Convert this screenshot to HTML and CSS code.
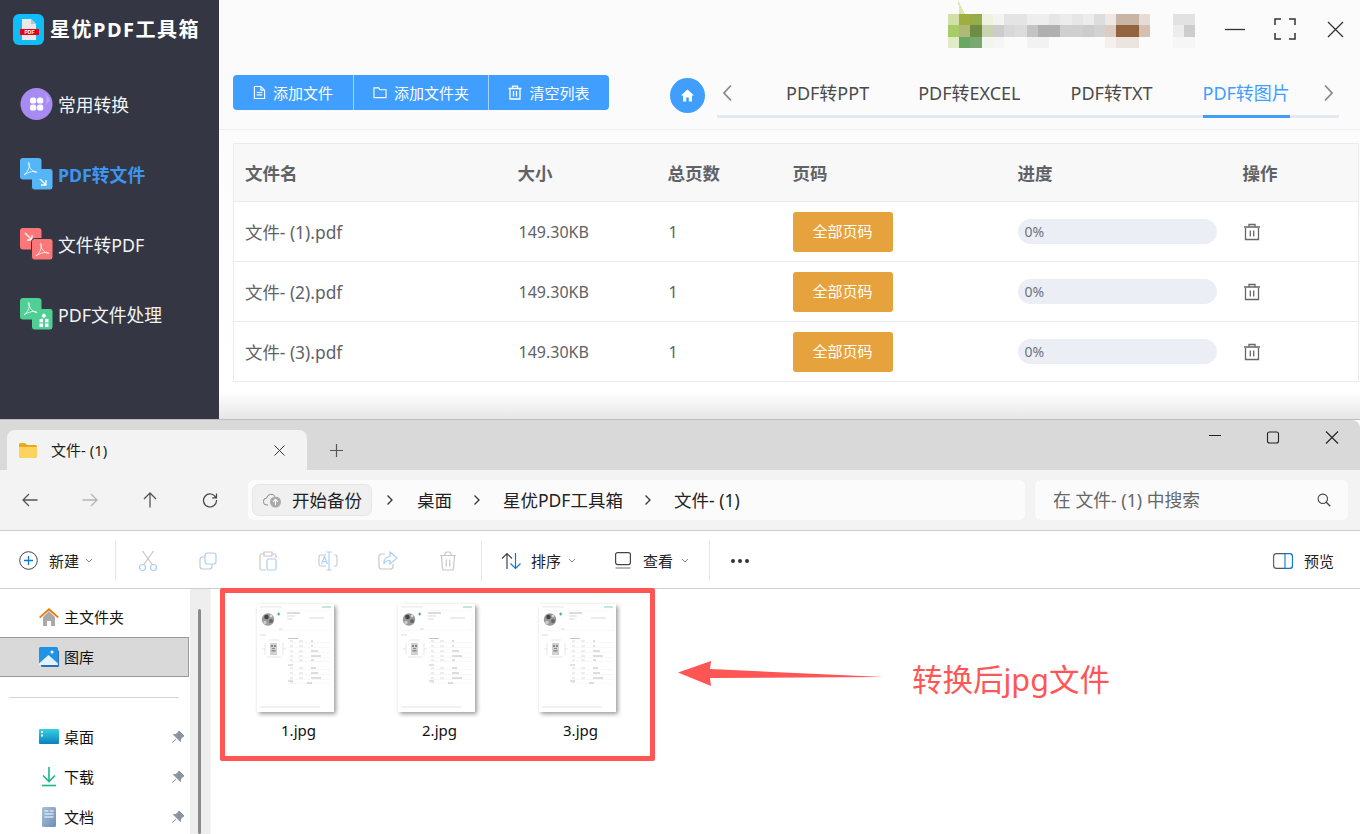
FILE: index.html
```html
<!DOCTYPE html>
<html lang="zh-CN">
<head>
<meta charset="utf-8">
<title>星优PDF工具箱</title>
<link rel="stylesheet" href="styles.css">
</head>
<body>
<svg class="defs" width="0" height="0" aria-hidden="true">
  <defs>
    <symbol id="acro" viewBox="0 0 21 21"><path d="M4 17c2-1 4.500-5 5.500-9 .4-2-.2-4-1-3.500s0 3 2 6 4.500 4 6 4-.5-1.500-3-1.200-6 1.500-8 2.500c-1 .5-1.500.8-1.500 1.200" fill="none" stroke="#fff" stroke-width=".9" opacity=".85"/></symbol>
    <symbol id="trash" viewBox="0 0 18 18"><path d="M2.500 5v11.500h13V5M1 4h16M6 4V1.500h6V4M7.300 7.500v6M10.700 7.500v6" fill="none" stroke="currentColor" stroke-width="1.300"/></symbol>
    <symbol id="pin" viewBox="0 0 14 14"><path d="M8 1l5 5-1.200.6L9.500 9l-.2 2.600-6.800-7L5 4.400l2.400-2.300zM5 9l-3.800 3.800" fill="#8b949c" stroke="#8b949c" stroke-width="1"/></symbol>
    <symbol id="chev" viewBox="0 0 8 5"><path d="M1 1l3 3 3-3" fill="none" stroke="#777" stroke-width=".9"/></symbol>
    <symbol id="crumb" viewBox="0 0 8 12"><path d="M1.500 1.500L6 6l-4.500 4.500" fill="none" stroke="#333" stroke-width="1.300"/></symbol>
    <symbol id="doc" viewBox="0 0 77 108">
      <rect width="77" height="108" fill="#fff"/>
      <path d="M3 3h22" stroke="#ddd" stroke-width=".7"/><path d="M65 3h9" stroke="#8fd0ac" stroke-width="1"/>
      <path d="M3 6.500h71v20H3z" fill="none" stroke="#f2f2f2" stroke-width=".5"/>
      <circle cx="11" cy="15.500" r="6.200" fill="#9a9a9a"/><circle cx="9.500" cy="13" r="2.300" fill="#444"/><circle cx="14" cy="17" r="2" fill="#666"/><circle cx="8" cy="18.500" r="1.700" fill="#ccc"/><circle cx="14" cy="12" r="1.300" fill="#ddd"/>
      <path d="M21.700 8.500v3M20.200 10h3" stroke="#3aa76d" stroke-width="1"/>
      <path d="M30 9h13" stroke="#999" stroke-width=".7"/><path d="M30 12h8M30 15h6M52 14h15M22 25h4M3 31h6" stroke="#ccc" stroke-width=".7"/>
      <g fill="none" stroke="#ccc" stroke-width=".5"><path d="M8 39v12M26 39v12M5 45h3M26 45h3M10 53h14M12 36h10"/></g>
      <path d="M13 39h7v12h-7z" fill="#d2d2d2"/><path d="M14 41h2v2h-2zM17 41h2v2h-2zM14.500 46h4v1.500h-4zM15 44h3v1h-3z" fill="#8a8a8a"/>
      <path d="M31 34.500h10M31 61h5M31 77h5" stroke="#aaa" stroke-width=".7"/>
      <path d="M31 38.500h43M31 43.500h43M31 48.500h43M31 53.500h43M31 57.500h43M31 65.500h43M31 70.500h43M31 75.500h43M31 79.500h43" stroke="#f0f0f0" stroke-width=".5"/>
      <path d="M33 37h3M42 37h4M33 42h3M42 42h4M33 47h3M42 47h4M33 52h3M42 52h4M33 56h3M42 56h4M33 64h3M42 64h4M33 69h3M42 69h4M33 74h3M42 74h4M33 78h3" stroke="#d0d0d0" stroke-width=".8"/>
      <path d="M54 37h2M54 42h2M54 47h7M54 52h10M54 56h3M54 64h5M54 69h7M54 74h10M50 79h5" stroke="#aaa" stroke-width=".8"/>
      <path d="M3 103h60" stroke="#ddd" stroke-width=".8"/>
    </symbol>
  </defs>
</svg>

<div class="stage">
  <section class="app">
    <aside class="side">
      <div class="brand">
        <svg class="logo" viewBox="0 0 31 31"><rect width="31" height="31" rx="6" fill="#0fbdfb"/><path d="M9 5h9l5 5v16H9z" fill="#e8e8ea"/><path d="M18 5l5 5h-5z" fill="#bfc1c6"/><rect x="7" y="15" width="19" height="6" fill="#e8000f"/><text class="logo-t" x="16.500" y="20">PDF</text></svg>
        <span class="brand-name">星优PDF工具箱</span>
      </div>
      <nav class="menu">
        <a class="menu-item">
          <svg class="menu-ic" viewBox="0 0 33 32"><circle cx="16.500" cy="16" r="16" fill="#a78bf3"/><path d="M24 5a16 16 0 0 1 6 8l-5 4a10 10 0 0 0-1-12z" fill="#bda6f7"/><g fill="#fff"><rect x="10" y="9.500" width="6.300" height="6.100" rx="2.600"/><rect x="17" y="9.500" width="6.300" height="6.100" rx="2.600"/><rect x="10" y="16.400" width="6.300" height="6.100" rx="2.600"/><rect x="17" y="16.400" width="6.300" height="6.100" rx="2.600"/></g></svg>
          <span>常用转换</span>
        </a>
        <a class="menu-item active">
          <svg class="menu-ic" viewBox="0 0 33 32"><rect x="11.500" y="10.500" width="21.500" height="21.500" rx="3" fill="#55b6f7" stroke="#343743"/><path d="M19 20l7 7M26 22v5h-5" fill="none" stroke="#fff" stroke-width="1.300"/><rect width="21.500" height="21.500" rx="3" fill="#55b6f7"/><use href="#acro" width="21" height="21"/></svg>
          <span>PDF转文件</span>
        </a>
        <a class="menu-item">
          <svg class="menu-ic" viewBox="0 0 33 32"><rect width="21.500" height="21.500" rx="3" fill="#fd7678"/><path d="M5 5l7 7M12 7v5H7" fill="none" stroke="#fff" stroke-width="1.300"/><rect x="11.500" y="10.500" width="21.500" height="21.500" rx="3" fill="#fd7678" stroke="#343743"/><use href="#acro" x="12" y="11" width="21" height="21"/></svg>
          <span>文件转PDF</span>
        </a>
        <a class="menu-item">
          <svg class="menu-ic" viewBox="0 0 33 32"><rect x="11.500" y="10.500" width="21.500" height="21.500" rx="3" fill="#4fcf93" stroke="#343743"/><g fill="#fff"><rect x="22" y="16" width="3.500" height="3.500" transform="rotate(45 23.800 17.800)"/><rect x="19.500" y="20.800" width="3.500" height="3.500"/><rect x="25" y="20.800" width="3.500" height="3.500"/><rect x="19.500" y="25.500" width="3.500" height="3.500"/><rect x="25" y="25.500" width="3.500" height="3.500"/></g><rect width="21.500" height="21.500" rx="3" fill="#4fcf93"/><use href="#acro" width="21" height="21"/></svg>
          <span>PDF文件处理</span>
        </a>
      </nav>
    </aside>

    <main class="main">
      <header class="titlebar">
        <svg class="mosaic" viewBox="0 0 22 3" preserveAspectRatio="none" shape-rendering="crispEdges">
          <g>
            <rect x="0" y="0" width="1" height="1" fill="#d0e0a8"/><rect x="1" y="0" width="1" height="1" fill="#a0ad40"/><rect x="2" y="0" width="1" height="1" fill="#95ad45"/><rect x="3" y="0" width="1" height="1" fill="#eef2e0"/><rect x="4" y="0" width="1" height="1" fill="#f3f3f3"/><rect x="5" y="0" width="2" height="1" fill="#e4e4e4"/><rect x="7" y="0" width="2" height="1" fill="#eeeeee"/><rect x="9" y="0" width="1" height="1" fill="#e6e6e6"/><rect x="10" y="0" width="1" height="1" fill="#ececec"/><rect x="11" y="0" width="1" height="1" fill="#e6e6e6"/><rect x="12" y="0" width="1" height="1" fill="#ececec"/><rect x="13" y="0" width="1" height="1" fill="#dddddd"/><rect x="14" y="0" width="1" height="1" fill="#efe9e5"/><rect x="15" y="0" width="2" height="1" fill="#c9b5a6"/><rect x="17" y="0" width="1" height="1" fill="#e6dcd5"/><rect x="20" y="0" width="2" height="1" fill="#e2e2e2"/>
            <rect x="0" y="1" width="1" height="1" fill="#a8cc68"/><rect x="1" y="1" width="1" height="1" fill="#b0b878"/><rect x="2" y="1" width="1" height="1" fill="#6f8c45"/><rect x="3" y="1" width="1" height="1" fill="#c8d4b0"/><rect x="4" y="1" width="1" height="1" fill="#cccccc"/><rect x="5" y="1" width="1" height="1" fill="#d8d8d8"/><rect x="6" y="1" width="1" height="1" fill="#dcdcdc"/><rect x="7" y="1" width="1" height="1" fill="#c4c4c4"/><rect x="8" y="1" width="2" height="1" fill="#b0b0b0"/><rect x="10" y="1" width="2" height="1" fill="#cfcfcf"/><rect x="12" y="1" width="1" height="1" fill="#cccccc"/><rect x="13" y="1" width="1" height="1" fill="#d2d2d2"/><rect x="14" y="1" width="1" height="1" fill="#dccdc2"/><rect x="15" y="1" width="2" height="1" fill="#93633f"/><rect x="17" y="1" width="1" height="1" fill="#d5c0b0"/><rect x="20" y="1" width="1" height="1" fill="#ececec"/><rect x="21" y="1" width="1" height="1" fill="#cdcdcd"/>
            <rect x="0" y="2" width="1" height="1" fill="#e0ecc8"/><rect x="1" y="2" width="1" height="1" fill="#68a860"/><rect x="2" y="2" width="1" height="1" fill="#7aa870"/><rect x="3" y="2" width="1" height="1" fill="#f2f5ee"/><rect x="4" y="2" width="1" height="1" fill="#f5f5f5"/><rect x="7" y="2" width="2" height="1" fill="#f2f2f2"/><rect x="14" y="2" width="1" height="1" fill="#f5f0ec"/><rect x="15" y="2" width="2" height="1" fill="#ebe4df"/><rect x="20" y="2" width="2" height="1" fill="#f6f6f6"/>
          </g>
          <path d="M.9-1.200L1.500 0H1z" fill="#dde8b0"/>
        </svg>
        <div class="winbtns">
          <button class="winbtn"><svg width="20" height="20" viewBox="0 0 20 20"><path d="M0 10.500h20" stroke="#333" stroke-width="1.300"/></svg></button>
          <button class="winbtn"><svg width="22" height="22" viewBox="0 0 22 22"><path d="M1 7V1h6M15 1h6v6M21 15v6h-6M7 21H1v-6" fill="none" stroke="#333" stroke-width="1.500"/></svg></button>
          <button class="winbtn"><svg width="17" height="17" viewBox="0 0 17 17"><path d="M1 1l15 15M16 1L1 16" stroke="#333" stroke-width="1.300"/></svg></button>
        </div>
      </header>

      <div class="toolbar">
        <div class="btn-group">
          <button class="tbtn t1"><svg width="13" height="15" viewBox="0 0 14 15"><path d="M1.500 1h7l4 4v9h-11zM8.500 1v4h4M4 7.500h6M4 10h6" fill="none" stroke="#fff" stroke-width="1.200"/></svg><span>添加文件</span></button>
          <button class="tbtn t2"><svg width="14" height="13" viewBox="0 0 15 13"><path d="M1 1.500h5l1.500 2H14V12H1z" fill="none" stroke="#fff" stroke-width="1.200"/></svg><span>添加文件夹</span></button>
          <button class="tbtn t3"><svg width="14" height="15" viewBox="0 0 14 15"><path d="M2 4v10h10V4M.5 3.500h13M4.500 3.500V1.200h5v2.300M5.500 6v5.500M8.500 6v5.500" fill="none" stroke="#fff" stroke-width="1.300"/></svg><span>清空列表</span></button>
        </div>
        <button class="home"><svg width="15" height="15" viewBox="0 0 15 15"><path d="M7.500 1.500L1 7.500h2v6h3.200V9.500h2.600v4H12v-6h2z" fill="#fff"/></svg></button>
        <div class="tabs">
          <svg class="chevbtn" width="12" height="18" viewBox="0 0 12 18"><path d="M10 1.500L3 9l7 7.500" fill="none" stroke="#8a8a8a" stroke-width="1.800"/></svg>
          <a class="tab first">PDF转PPT</a>
          <a class="tab">PDF转EXCEL</a>
          <a class="tab">PDF转TXT</a>
          <a class="tab on">PDF转图片</a>
          <svg class="chevbtn right" width="12" height="18" viewBox="0 0 12 18"><path d="M2 1.500L9 9l-7 7.500" fill="none" stroke="#8a8a8a" stroke-width="1.800"/></svg>
        </div>
      </div>

      <div class="content">
        <table class="grid">
          <thead>
            <tr><th class="c1">文件名</th><th class="c2">大小</th><th class="c3">总页数</th><th class="c4">页码</th><th class="c5">进度</th><th class="c6">操作</th></tr>
          </thead>
          <tbody>
            <tr><td>文件- (1).pdf</td><td class="num">149.30KB</td><td class="num">1</td><td><button class="pages"><span class="up">全部页码</span></button></td><td><div class="bar">0%</div></td><td><svg class="del"><use href="#trash"/></svg></td></tr>
            <tr><td>文件- (2).pdf</td><td class="num">149.30KB</td><td class="num">1</td><td><button class="pages"><span class="up">全部页码</span></button></td><td><div class="bar">0%</div></td><td><svg class="del"><use href="#trash"/></svg></td></tr>
            <tr><td>文件- (3).pdf</td><td class="num">149.30KB</td><td class="num">1</td><td><button class="pages"><span class="up">全部页码</span></button></td><td><div class="bar">0%</div></td><td><svg class="del"><use href="#trash"/></svg></td></tr>
          </tbody>
        </table>
      </div>
    </main>
  </section>

  <section class="explorer">
    <div class="tabstrip">
      <div class="xtab">
        <svg width="18" height="15" viewBox="0 0 18 15"><path d="M0 1.500A1.500 1.500 0 0 1 1.500 0H6l2 2h8.500A1.500 1.500 0 0 1 18 3.500V5H0z" fill="#e8a91f"/><path d="M0 4h18v9.500a1.500 1.500 0 0 1-1.500 1.500h-15A1.500 1.500 0 0 1 0 13.500z" fill="#fdd35d"/></svg>
        <span class="xtab-t up">文件- (1)</span>
        <svg class="xtab-x" width="11" height="11" viewBox="0 0 11 11"><path d="M.5.500l10 10M10.500.500l-10 10" stroke="#333" stroke-width="1"/></svg>
      </div>
      <button class="xplus"><svg width="13" height="13" viewBox="0 0 13 13"><path d="M6.500 0v13M0 6.500h13" stroke="#555" stroke-width="1.200"/></svg></button>
      <div class="xwin">
        <button class="xwbtn"><svg width="14" height="14" viewBox="0 0 14 14"><path d="M1 4.500h12" stroke="#222" stroke-width="1"/></svg></button>
        <button class="xwbtn"><svg width="14" height="14" viewBox="0 0 14 14"><rect x="1.500" y="1" width="11" height="11" rx="2" fill="none" stroke="#222" stroke-width="1.100"/></svg></button>
        <button class="xwbtn"><svg width="14" height="14" viewBox="0 0 14 14"><path d="M1 .500l12 12M13 .500l-12 12" stroke="#222" stroke-width="1.100"/></svg></button>
      </div>
    </div>

    <div class="navrow">
      <button class="nbtn"><svg width="16" height="14" viewBox="0 0 16 14"><path d="M15.500 7H1M7 1L1 7l6 6" fill="none" stroke="#555" stroke-width="1.300"/></svg></button>
      <button class="nbtn"><svg width="16" height="14" viewBox="0 0 16 14"><path d="M.5 7H15M9 1l6 6-6 6" fill="none" stroke="#b5b5b5" stroke-width="1.300"/></svg></button>
      <button class="nbtn"><svg width="16" height="16" viewBox="0 0 16 16"><path d="M8 15.500V1M2 7l6-6 6 6" fill="none" stroke="#555" stroke-width="1.300"/></svg></button>
      <button class="nbtn"><svg width="16" height="16" viewBox="0 0 16 16"><path d="M13.800 5.500A6.500 6.500 0 1 0 14.500 8M14.500 1.500v4.300h-4.300" fill="none" stroke="#444" stroke-width="1.200"/></svg></button>
      <div class="addr">
        <div class="chip">
          <svg width="19" height="16" viewBox="0 0 19 16"><path d="M5 13H4a3.500 3.500 0 0 1-.3-7A4.500 4.500 0 0 1 12 4.500" fill="none" stroke="#8a8a8a" stroke-width="1"/><circle cx="12.500" cy="10" r="5.500" fill="#a9a9a9"/><path d="M12.500 13V7.500M10 9.800l2.500-2.500 2.500 2.500" fill="none" stroke="#fff" stroke-width="1.100"/></svg>
          <span class="up">开始备份</span>
        </div>
        <svg class="crumb c-a"><use href="#crumb"/></svg><span class="up">桌面</span>
        <svg class="crumb"><use href="#crumb"/></svg><span class="up">星优PDF工具箱</span>
        <svg class="crumb"><use href="#crumb"/></svg><span class="up">文件- (1)</span>
      </div>
      <div class="search">
        <span class="up">在 文件- (1) 中搜索</span>
        <svg width="14" height="14" viewBox="0 0 14 14"><circle cx="5.800" cy="5.800" r="4.700" fill="none" stroke="#444" stroke-width="1.100"/><path d="M9.300 9.300l4 4" stroke="#444" stroke-width="1.300"/></svg>
      </div>
    </div>

    <div class="cmdbar">
      <div class="cmd new">
        <svg width="19" height="19" viewBox="0 0 19 19"><circle cx="9.500" cy="9.500" r="8.800" fill="none" stroke="#444" stroke-width="1"/><path d="M9.500 5v9M5 9.500h9" stroke="#0a78d7" stroke-width="1.300"/></svg>
        <span>新建</span><svg class="cv"><use href="#chev"/></svg>
      </div>
      <i class="vsep"></i>
      <button class="ic"><svg width="20" height="22" viewBox="0 0 20 22"><g fill="none" stroke="#a8d0f5" stroke-width="1.200"><circle cx="4.500" cy="17.500" r="3"/><circle cx="15.500" cy="17.500" r="3"/></g><path d="M5.500 15L15.500 1M14.500 15L4.500 1" fill="none" stroke="#c4c4c4" stroke-width="1.200"/></svg></button>
      <button class="ic"><svg width="18" height="18" viewBox="0 0 18 18"><rect x="6" y="1" width="11" height="11" rx="2.500" fill="#fff" stroke="#a8d0f5" stroke-width="1.200"/><path d="M6 5H3.500A2.500 2.500 0 0 0 1 7.500v7A2.500 2.500 0 0 0 3.500 17h7a2.500 2.500 0 0 0 2.500-2.500V12" fill="none" stroke="#c8c8c8" stroke-width="1.200"/></svg></button>
      <button class="ic"><svg width="18" height="20" viewBox="0 0 18 20"><path d="M5 3H2.500A1.500 1.500 0 0 0 1 4.500v13A1.500 1.500 0 0 0 2.500 19H7M13 3h2.500A1.500 1.500 0 0 1 17 4.500V7M5 1h8v4H5z" fill="none" stroke="#c8c8c8" stroke-width="1.200"/><rect x="8" y="8" width="9" height="11" rx="1.500" fill="none" stroke="#a8d0f5" stroke-width="1.200"/></svg></button>
      <button class="ic"><svg width="20" height="20" viewBox="0 0 20 20"><path d="M8 4H2.500A1.500 1.500 0 0 0 1 5.500v8A1.500 1.500 0 0 0 2.500 15H8M16 4h1.500A1.500 1.500 0 0 1 19 5.500v8a1.500 1.500 0 0 1-1.500 1.500H16" fill="none" stroke="#c8c8c8" stroke-width="1.100"/><path d="M11 1v18M13.500 1h-5M13.500 19h-5" fill="none" stroke="#a8d0f5" stroke-width="1.100"/><path d="M3.500 13l3-7.500 3 7.500M4.500 10.800h4" fill="none" stroke="#a8d0f5" stroke-width="1.100"/></svg></button>
      <button class="ic"><svg width="20" height="19" viewBox="0 0 20 19"><path d="M7 3H3.500A2.500 2.500 0 0 0 1 5.500v10A2.500 2.500 0 0 0 3.500 18h9a2.500 2.500 0 0 0 2.500-2.500V13" fill="none" stroke="#c8c8c8" stroke-width="1.200"/><path d="M12 1l7 6-7 6V9.500C9 9.500 6.500 11 6 13c-.5-4 2-7 6-7.500z" fill="none" stroke="#a8d0f5" stroke-width="1.200"/></svg></button>
      <button class="ic"><svg width="18" height="20" viewBox="0 0 18 20"><path d="M1 4.500h16M6 4.500V3a2 2 0 0 1 2-2h2a2 2 0 0 1 2 2v1.500M2.500 4.500l1 12.500a2 2 0 0 0 2 2h7a2 2 0 0 0 2-2l1-12.500M7.300 8.500v7M10.700 8.500v7" fill="none" stroke="#c8c8c8" stroke-width="1.200"/></svg></button>
      <i class="vsep s2"></i>
      <div class="cmd sort">
        <svg width="21" height="18" viewBox="0 0 21 18"><path d="M6 17V1.500M1 6.500l5-5 5 5" fill="none" stroke="#444" stroke-width="1.200"/><path d="M14.500 1v15.500M9.500 11.500l5 5 5-5" fill="none" stroke="#0a78d7" stroke-width="1.200"/></svg>
        <span>排序</span><svg class="cv"><use href="#chev"/></svg>
      </div>
      <div class="cmd view">
        <svg width="16" height="17" viewBox="0 0 16 17"><rect x=".6" y=".6" width="14.800" height="12" rx="2" fill="none" stroke="#444" stroke-width="1.200"/><path d="M.5 16h15" stroke="#999" stroke-width="1.400"/></svg>
        <span>查看</span><svg class="cv"><use href="#chev"/></svg>
      </div>
      <i class="vsep s3"></i>
      <button class="dots"><i></i><i></i><i></i></button>
      <div class="cmd preview">
        <svg width="20" height="16" viewBox="0 0 20 16"><rect x=".6" y=".6" width="18.800" height="14.800" rx="3" fill="none" stroke="#555" stroke-width="1.100"/><path d="M12 .6h4.400a3 3 0 0 1 3 3v8.800a3 3 0 0 1-3 3H12z" fill="#fff" stroke="#0a78d7" stroke-width="1.100"/></svg>
        <span>预览</span>
      </div>
    </div>

    <div class="xbody">
      <div class="pane">
        <div class="prow">
          <svg class="pi" viewBox="0 0 20 20"><path d="M4 10v9h4v-5h4v5h4v-9L10 4z" fill="#a9a9a9"/><path d="M0 10L10 1l10 9-1.500 1L10 3.500 1.500 11z" fill="#e8770f"/></svg>
          <span class="up">主文件夹</span>
        </div>
        <div class="prow sel">
          <svg class="pi" viewBox="0 0 20 20"><rect x="2" y="3" width="18" height="17" rx="1.500" fill="#2a6fb8"/><rect width="19" height="18" rx="1.500" fill="#1f93e6"/><path d="M0 16.500L9.500 8l9.500 8.500V18H0z" fill="#e6f2fb"/><circle cx="13" cy="5" r="1.500" fill="#fff"/></svg>
          <span class="up">图库</span>
        </div>
        <div class="psep"></div>
        <div class="prow">
          <svg class="pi" viewBox="0 0 20 20"><defs><linearGradient id="dk" x1="0" y1="0" x2="0" y2="1"><stop offset="0" stop-color="#34d2e2"/><stop offset="1" stop-color="#0d7fc0"/></linearGradient></defs><rect y="2" width="20" height="15" rx="1" fill="url(#dk)"/><rect x="2" y="4" width="2" height="2" fill="#fff"/><rect x="2" y="7.500" width="2" height="2" fill="#fff"/></svg>
          <span class="up">桌面</span><svg class="pin"><use href="#pin"/></svg>
        </div>
        <div class="prow">
          <svg class="pi" viewBox="0 0 20 20"><path d="M10 0v14M4 8.500l6 6 6-6" fill="none" stroke="#1db48a" stroke-width="1.600"/><path d="M3 18.500h14" stroke="#1db48a" stroke-width="1.600"/></svg>
          <span class="up">下载</span><svg class="pin"><use href="#pin"/></svg>
        </div>
        <div class="prow">
          <svg class="pi" viewBox="0 0 20 20"><defs><linearGradient id="wd" x1="0" y1="0" x2="1" y2="1"><stop offset="0" stop-color="#a9c0dc"/><stop offset="1" stop-color="#6f8fb5"/></linearGradient></defs><rect x="3" width="14" height="20" rx="1.500" fill="url(#wd)"/><path d="M5.500 4h4M11 4h3.500M5.500 7h9M5.500 10h9" stroke="#fff" stroke-width="1"/></svg>
          <span class="up">文档</span><svg class="pin"><use href="#pin"/></svg>
        </div>
      </div>
      <div class="scroll"><div class="thumb"></div></div>
      <div class="files">
        <div class="file"><svg class="doc"><use href="#doc"/></svg><span>1.jpg</span></div>
        <div class="file"><svg class="doc"><use href="#doc"/></svg><span>2.jpg</span></div>
        <div class="file"><svg class="doc"><use href="#doc"/></svg><span>3.jpg</span></div>
      </div>
    </div>
  </section>

  <div class="redbox"></div>
  <svg class="arrow" width="206" height="26" viewBox="0 0 206 26"><path d="M0 11.500L33 0l-1 8 174 8L32 17l1 8z" fill="#ff5555"/></svg>
  <div class="note">转换后jpg文件</div>
</div>
</body>
</html>
```

FILE: styles.css
```css
* { box-sizing: border-box; }
html, body { margin: 0; padding: 0; }
body {
  width: 1360px;
  height: 834px;
  overflow: hidden;
  background: #fff;
  font-family: "Noto Sans", "Noto Sans CJK SC", sans-serif;
}
button { border: 0; padding: 0; margin: 0; background: none; font: inherit; display: flex; align-items: center; justify-content: center; }
svg { display: block; flex: none; }
.defs { position: absolute; }
.stage { position: relative; width: 1360px; height: 834px; overflow: hidden; display: flex; flex-direction: column; }
.up { margin-bottom: 2px; }

/* app */
.app { display: flex; height: 419px; flex: none; }
.side { width: 219px; flex: none; background: #343743; color: #fff; }
.brand { display: flex; align-items: center; padding: 14px 0 0 13px; gap: 6px; height: 45px; }
.logo { width: 31px; height: 31px; }
.logo-t { font: 700 5px "Liberation Sans", sans-serif; fill: #fff; text-anchor: middle; }
.brand-name { font-size: 20px; font-weight: 700; letter-spacing: 1.500px; line-height: 28px; white-space: nowrap; }
.menu { padding-top: 24px; }
.menu-item { display: flex; align-items: center; height: 70px; padding-left: 20px; gap: 5px; font-size: 17.800px; color: #f2f3f5; white-space: nowrap; }
.menu-item.active { color: #3c96f0; font-weight: 700; }
.menu-ic { width: 33px; height: 32px; }

.main { flex: 1; min-width: 0; background: #fbfbfb; display: flex; flex-direction: column; }
.titlebar { height: 66px; flex: none; display: flex; justify-content: flex-end; align-items: flex-start; }
.mosaic { width: 247px; height: 34px; margin: 14px 15px 0 0; overflow: visible; }
.winbtns { display: flex; }
.winbtn { width: 50px; height: 58px; }

.toolbar { height: 64px; flex: none; display: flex; align-items: flex-start; padding-left: 14px; border-bottom: 1px solid #eeeeee; }
.btn-group { display: flex; height: 35px; margin-top: 9px; background: #409eff; border-radius: 4px; width: 376px; flex: none; }
.tbtn { height: 35px; color: #fff; font-size: 15px; gap: 7px; white-space: nowrap; }
.t1 { width: 121px; border-right: 1px solid #a8d2fd; }
.t2 { width: 135px; border-right: 1px solid #a8d2fd; }
.t3 { width: 120px; }
.home { width: 35px; height: 35px; border-radius: 50%; background: #409eff; margin: 12px 0 0 61px; flex: none; }
.tabs { display: flex; align-items: flex-start; width: 622px; margin: 9px 0 0 12px; height: 43px; border-bottom: 3px solid #e4e8f1; padding-left: 4px; flex: none; }
.chevbtn { margin-top: 9px; }
.chevbtn.right { margin-left: auto; margin-right: 4px; }
.tab { height: 40px; line-height: 36px; font-size: 18px; color: #4a4a4a; margin-left: 50px; white-space: nowrap; border-bottom: 3px solid transparent; box-sizing: content-box; }
.tab.first { margin-left: 53px; margin-right: -1px; }
.tab.on { color: #409eff; border-bottom-color: #409eff; }

.content { flex: 1; padding: 13px 2px 0 14px; background: linear-gradient(#fcfcfc 0, #fff 253px, #fff 262px, #e6e6e6 100%); }
.grid { width: 1125px; border-collapse: collapse; table-layout: fixed; background: #fff; border: 1px solid #ebebeb; color: #606266; font-size: 17.400px; }
.grid th { height: 58px; background: #f8f8f8; text-align: left; font-weight: 700; font-size: 17.500px; padding: 0 12px 0 11px; border-bottom: 1px solid #ebebeb; }
.grid td { height: 60px; padding: 0 12px 0 11px; border-bottom: 1px solid #ebebeb; white-space: nowrap; }
.grid .num { font-size: 16px; padding-left: 12px; }
.c1 { width: 273px; }
.c2 { width: 150px; }
.c3 { width: 125px; }
.c4, .c5 { width: 225px; }
.c6 { width: 127px; }
.pages { width: 100px; height: 40px; background: #e6a23c; color: #fff; border-radius: 3px; font-size: 15px; }
.bar { width: 199px; height: 25px; line-height: 25px; border-radius: 13px; background: #ebeef5; font-size: 14px; padding-left: 7px; color: #70737a; }
.del { width: 18px; height: 18px; color: #666; }

/* explorer */
.explorer { flex: 1; min-height: 0; border-top: 1px solid #bdbdbd; display: flex; flex-direction: column; background: #fff; }
.tabstrip { height: 50px; flex: none; background: #d9d9d9; display: flex; padding-top: 10px; border-top-right-radius: 8px; }
.xtab { width: 300px; height: 40px; margin-left: 7px; background: #f3f3f3; border-radius: 8px 8px 0 0; display: flex; align-items: center; padding-left: 12px; font-size: 15px; color: #1f1f1f; }
.xtab-t { margin-left: 14px; }
.xtab-x { margin-left: auto; margin-right: 22px; }
.xplus { width: 58px; height: 40px; }
.xwin { display: flex; margin: -10px 0 0 auto; }
.xwbtn { width: 58px; height: 35px; }
.xwbtn:last-child { padding-left: 2px; }

.navrow { height: 61px; flex: none; background: #f3f3f3; display: flex; align-items: center; padding-right: 12px; border-bottom: 1px solid #cccccc; }
.nbtn { width: 60px; height: 40px; flex: none; }
.addr { width: 777px; height: 40px; margin-left: 8px; background: #fbfbfb; border-radius: 6px; display: flex; align-items: center; padding-left: 4px; font-size: 17.500px; color: #222; flex: none; white-space: nowrap; }
.chip { width: 120px; height: 32px; background: #f0f0f0; border: 1px solid #e6e6e6; border-radius: 7px; display: flex; align-items: center; padding-left: 10px; gap: 10px; }
.crumb { width: 8px; height: 12px; margin: 0 22px 0 21px; }
.crumb.c-a { margin: 0 23px 0 14px; }
.search { width: 313px; height: 40px; margin-left: 10px; background: #fbfbfb; border-radius: 6px; display: flex; align-items: center; justify-content: space-between; padding: 0 17px 0 18px; font-size: 17.800px; color: #666; flex: none; white-space: nowrap; }

.cmdbar { height: 58px; flex: none; background: #fff; display: flex; align-items: center; padding-top: 2px; border-bottom: 1px solid #cfcfcf; position: relative; }
.cmd { display: flex; align-items: center; font-size: 15px; color: #222; white-space: nowrap; }
.cv { width: 8px; height: 5px; }
.new { width: 115px; padding-left: 19px; flex: none; }
.new span { margin: 0 6px 0 11px; }
.vsep { width: 1px; height: 40px; background: #e5e5e5; flex: none; }
.ic { width: 60px; height: 40px; flex: none; }
.ic:first-of-type { margin-left: 2px; }
.vsep.s2 { margin-left: 3px; }
.sort { margin-left: 19px; flex: none; }
.sort span { margin: 0 7px 0 9px; }
.view { margin-left: 39px; flex: none; }
.view span { margin: 0 8px 0 12px; }
.vsep.s3 { margin-left: 20px; }
.dots { display: flex; gap: 3px; margin-left: 21px; flex: none; }
.dots i { width: 4px; height: 4px; border-radius: 50%; background: #333; }
.preview { margin-left: auto; margin-right: 26px; }
.preview span { margin-left: 11px; }

.xbody { flex: 1; min-height: 0; display: flex; overflow: hidden; }
.pane { width: 190px; flex: none; padding-top: 8px; font-size: 15px; color: #111; }
.prow { height: 40px; display: flex; align-items: center; padding-left: 39px; gap: 5px; white-space: nowrap; }
.prow.sel { background: #d9d9d9; border: 1px solid #999; border-left: 0; padding-left: 39px; margin-right: 1px; }
.pi { width: 20px; height: 20px; }
.pin { width: 14px; height: 14px; margin-left: auto; margin-right: 5px; }
.psep { height: 1px; background: #d4d4d4; margin: 20px 11px 19px 9px; }
.scroll { width: 20px; flex: none; background: #eeeeee; padding: 20px 0 0 8px; }
.thumb { width: 3px; height: 100%; background: #8a8a8a; border-radius: 2px; }
.files { flex: 1; display: flex; align-items: flex-start; padding: 15px 0 0 14px; border-left: 1px solid #f3f3f3; }
.file { width: 141px; display: flex; flex-direction: column; align-items: center; font-size: 15px; line-height: 20px; color: #111; }
.file span { margin-left: 6px; }
.doc { width: 77px; height: 108px; filter: drop-shadow(2px 2px 2px rgba(0,0,0,.4)); margin-bottom: 8px; }

/* annotation overlay */
.redbox { position: absolute; left: 220px; top: 588px; width: 435px; height: 173px; border: 5px solid #ff5555; border-radius: 2px; }
.arrow { position: absolute; left: 678px; top: 661px; }
.note { position: absolute; left: 912px; top: 657px; font-size: 30.500px; line-height: 44px; color: #ff5555; white-space: nowrap; }
```
